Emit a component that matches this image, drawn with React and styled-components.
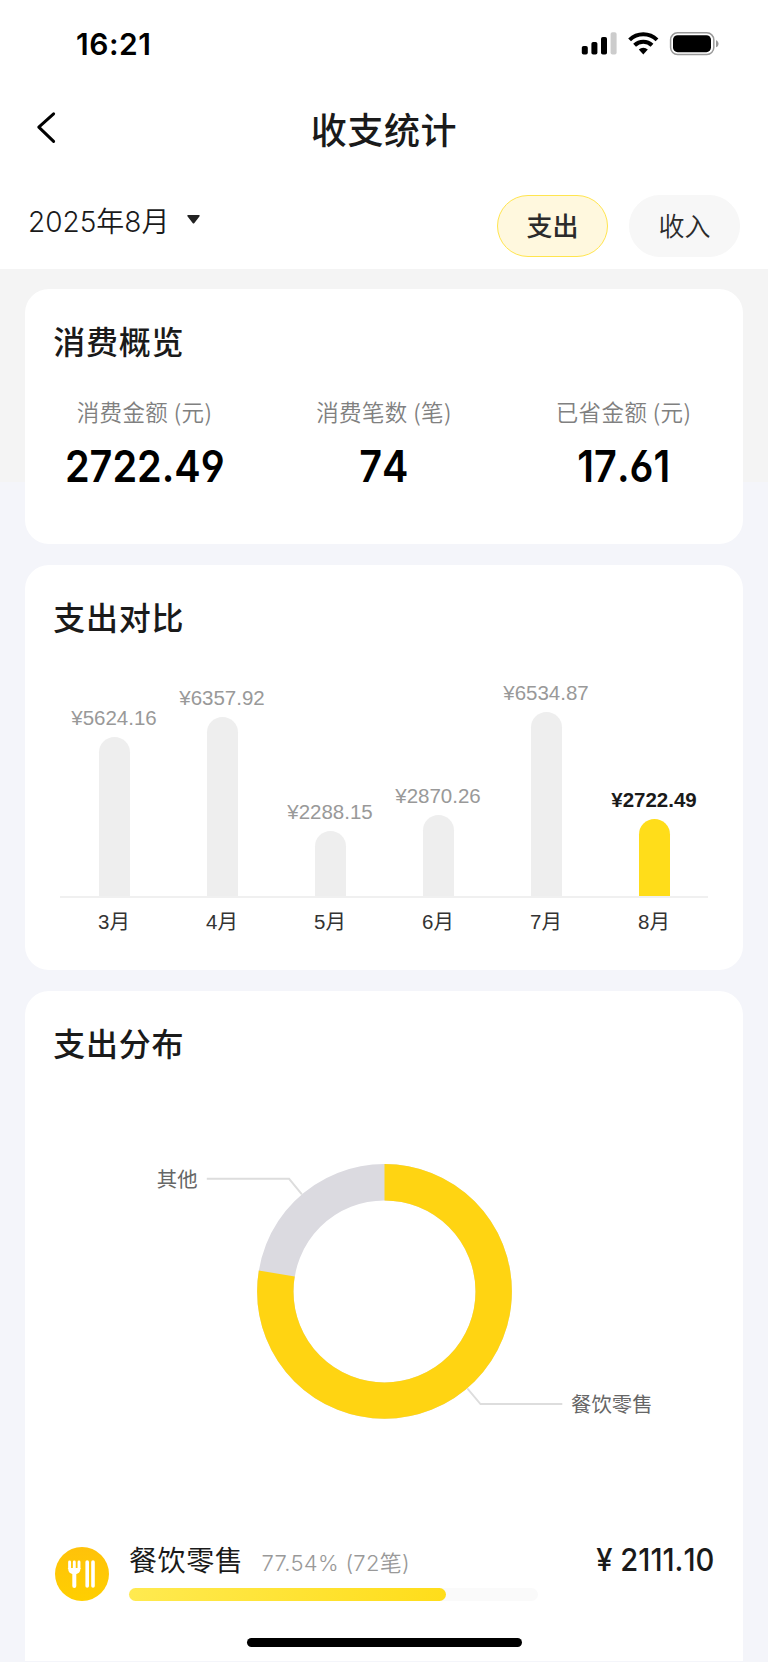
import styled, { createGlobalStyle } from 'styled-components';


const GlobalStyle = createGlobalStyle`
  * {
    box-sizing: border-box;
  }
  body {
    margin: 0;
    background: #f4f5fa;
    font-family: 'Inter', 'Noto Sans CJK SC', sans-serif;
    color: #1a1a1a;
  }
`;
const Page = styled.div`
  position: relative;
  width: 768px;
  height: 1662px;
  overflow: hidden;
  background: linear-gradient(#f4f4f4 482.5px, #f4f5fa 482.5px);
`;
const Header = styled.header`
  height: 269px;
  background: #fff;
`;
const StatusBar = styled.div`
  display: flex;
  align-items: center;
  justify-content: space-between;
  height: 88px;
  padding: 0 49px 0 76px;
`;
const Time = styled.div`
  font-size: 30px;
  font-weight: 600;
  letter-spacing: 0.5px;
  color: #000;
`;
const NavBar = styled.div`
  display: grid;
  grid-template-columns: 60px 1fr 60px;
  align-items: center;
  height: 80px;
  padding: 0 20px;
`;
const BackButton = styled.button`
  display: flex;
  padding: 0 0 0 16px;
  border: 0;
  background: none;
`;
const Title = styled.h1`
  margin: 0;
  padding-top: 5px;
  text-align: center;
  font-size: 36px;
  font-weight: 500;
  line-height: 44px;
  letter-spacing: 0.6px;
`;
const Filters = styled.div`
  display: flex;
  justify-content: space-between;
  padding: 27px 28px 0 28px;
`;
const MonthPicker = styled.div`
  display: flex;
  align-items: center;
  gap: 18px;
  height: 49px;
  font-size: 28px;
  font-weight: 350;
`;
const Tabs = styled.div`
  display: flex;
  gap: 21px;
`;
const Tab = styled.button`
  width: 111px;
  height: 62px;
  padding: 0 0 4px;
  border: 1px solid ${props => props.$active ? '#ffe54f' : '#f7f7f7'};
  border-radius: 31px;
  background: ${props => props.$active ? '#fff8de' : '#f7f7f7'};
  color: #2b2b2b;
  font-family: inherit;
  font-size: 26px;
  font-weight: ${props => props.$active ? 500 : 350};
`;
const Content = styled.main`
  display: flex;
  flex-direction: column;
  gap: 20.4px;
  padding: 20px 24.7px 0;
`;
const Card = styled.section`
  height: ${props => props.$height}px;
  padding-top: 34px;
  border-radius: 24px ${props => props.$open ? '24px 0 0' : ''};
  background: #fff;
`;
const CardTitle = styled.h2`
  margin: 0;
  padding-left: 28.6px;
  font-size: 32px;
  font-weight: 500;
  line-height: 40px;
  letter-spacing: 0.7px;
`;
const Stats = styled.div`
  display: grid;
  grid-template-columns: repeat(3, 1fr);
  margin-top: 33px;
  text-align: center;
`;
const StatLabel = styled.div`
  font-family: 'Noto Sans CJK SC', sans-serif;
  font-size: 22.5px;
  font-weight: 350;
  line-height: 30px;
  letter-spacing: 0.4px;
  color: #808080;
`;
const StatValue = styled.div`
  margin-top: 15px;
  font-size: 44px;
  font-weight: 600;
  line-height: 50px;
  font-kerning: none;
  font-feature-settings: 'cv03', 'cv04';
  color: #000;
  transform: scaleX(0.9);
`;
const BarChart = styled.div`
  width: 648px;
  margin: 51px auto 0;
  font-family: 'Liberation Sans', 'Noto Sans CJK SC', sans-serif;
  font-size: 20.5px;
`;
const Bars = styled.div`
  display: flex;
  align-items: flex-end;
  height: 208px;
  border-bottom: 2px solid #f0f0f0;
`;
const BarColumn = styled.div`
  display: flex;
  flex: 1;
  flex-direction: column;
  align-items: center;
  gap: 8px;
  min-width: 0;
`;
const BarValue = styled.div`
  line-height: 22px;
  font-weight: ${props => props.$active ? 'bold' : 'normal'};
  color: ${props => props.$active ? '#1a1a1a' : '#999'};
`;
const Bar = styled.div`
  width: 31px;
  border-radius: 16px 16px 0 0;
  background: ${props => props.$active ? '#ffdd1a' : '#eee'};
`;
const Months = styled.div`
  display: flex;
  margin-top: 10px;
`;
const Month = styled.div`
  flex: 1;
  text-align: center;
  line-height: 28px;
  color: #333;
`;
const Donut = styled.svg`
  display: block;
  width: 718.6px;
  height: 436px;
  font-family: 'Noto Sans CJK SC', sans-serif;
  font-size: 20.4px;
`;
const CategoryRow = styled.div`
  display: grid;
  grid-template-columns: 54px 409px 1fr;
  column-gap: 20px;
  align-items: start;
  padding: 37px 29px 0 30.3px;
`;
const CategoryIcon = styled.div`
  margin-top: 9px;
  width: 54px;
  height: 54px;
  border-radius: 50%;
  background: linear-gradient(#ffc20a, #ffcf00);
`;
const CategoryHead = styled.div`
  display: flex;
  align-items: baseline;
  gap: 18px;
  height: 50px;
  padding-top: 3px;
`;
const CategoryName = styled.span`
  font-size: 28px;
  line-height: 40px;
  letter-spacing: 0.6px;
`;
const CategoryShare = styled.span`
  font-size: 22px;
  font-weight: 350;
  letter-spacing: 0.3px;
  color: #999;
`;
const Track = styled.div`
  height: 13px;
  border-radius: 7px;
  background: #fafafa;
`;
const Fill = styled.div`
  height: 100%;
  border-radius: 7px;
  background: linear-gradient(100deg, #ffea50, #ffdd1a);
`;
const Amount = styled.div`
  padding-top: 2px;
  text-align: right;
  font-size: 31px;
  font-weight: 500;
  line-height: 40px;
  font-kerning: none;
  white-space: nowrap;
  transform: scaleX(0.94);
  transform-origin: right;
`;
const HomeIndicator = styled.div`
  position: absolute;
  left: 247px;
  bottom: 15px;
  width: 274.5px;
  height: 9px;
  border-radius: 5px;
  background: #000;
`;

const stats = [
    { label: '消费金额 (元)', value: '2722.49' },
    { label: '消费笔数 (笔)', value: '74' },
    { label: '已省金额 (元)', value: '17.61' },
];
const months = [
    { name: '3月', value: 5624.16 },
    { name: '4月', value: 6357.92 },
    { name: '5月', value: 2288.15 },
    { name: '6月', value: 2870.26 },
    { name: '7月', value: 6534.87 },
    { name: '8月', value: 2722.49, active: true },
];
const PX_PER_YUAN = 0.0282;


function StatusIcons(){
    return(
        <svg width="138" height="24" viewBox="581 32 138 24" fill="#000">
            <rect x="581.8" y="46" width="6" height="8.6" rx="1.8" />
            <rect x="591.4" y="42" width="6" height="12.6" rx="1.8" />
            <rect x="601" y="37" width="6" height="17.6" rx="1.8" />
            <rect x="610.6" y="32.3" width="6" height="22.3" rx="1.8" fill="#ccc" />
            <g fill="none" stroke="#000" strokeWidth="4">
                <path d="M629.6 39.9a19.6 19.6 0 0 1 27.4 0" />
                <path d="M634.6 45.2a12.4 12.4 0 0 1 17.4 0" />
            </g>
            <path d="M638.8 49.6a6.6 6.6 0 0 1 9 0l-4.5 4.9z" />
            <rect x="670.6" y="32.8" width="43.2" height="21.8" rx="7" fill="none" stroke="#999" strokeWidth="1.5" />
            <rect x="673" y="35.2" width="38" height="17" rx="4.6" />
            <path d="M716 40.2c3.4 1 3.4 6 0 7z" fill="#999" />
        </svg>
    )
}

function DonutChart(){
    // share of the main category, clockwise from 12 o'clock
    const share = 0.7754;
    const radius = 109.2;
    const length = 2 * Math.PI * radius;
    return(
        <Donut viewBox="24.7 1064.6 718.6 436">
            <g fill="none" strokeWidth="36.4">
                <circle cx="384.2" cy="1291" r={radius} stroke="#dbdae0" />
                <circle
                    cx="384.2"
                    cy="1291"
                    r={radius}
                    stroke="#ffd412"
                    strokeDasharray={`${length * share} ${length}`}
                    transform="rotate(-90 384.2 1291)"
                />
            </g>
            <g fill="none" stroke="#ddd" strokeWidth="1.9">
                <path d="M206.5 1178.4H288.8L301.6 1194" />
                <path d="M467 1388L480.2 1403.6H562" />
            </g>
            <g fill="#666">
                <text x="156.5" y="1186.5">其他</text>
                <text x="570.8" y="1411.5">餐饮零售</text>
            </g>
        </Donut>
    )
}

function App(){
    return(
        <Page>
            <GlobalStyle />
            <Header>
                <StatusBar>
                    <Time>16:21</Time>
                    <StatusIcons />
                </StatusBar>
                <NavBar>
                    <BackButton>
                        <svg width="22" height="34" viewBox="36 111 22 34" fill="none" stroke="#000" strokeWidth="3" strokeLinecap="round" strokeLinejoin="round">
                            <path d="M53.6 113.8L38.8 127.2L53.6 141.4" />
                        </svg>
                    </BackButton>
                    <Title>收支统计</Title>
                </NavBar>
                <Filters>
                    <MonthPicker>
                        <span>2025年8月</span>
                        <svg width="13" height="9" viewBox="0 0 13 9" fill="#222">
                            <path d="M1 0h11q1.2.4.4 1.4L7.4 8q-.9 1-1.8 0L.6 1.4q-.8-1 .4-1.4z" />
                        </svg>
                    </MonthPicker>
                    <Tabs>
                        <Tab $active>支出</Tab>
                        <Tab>收入</Tab>
                    </Tabs>
                </Filters>
            </Header>
            <Content>
                <Card $height={255.4}>
                    <CardTitle>消费概览</CardTitle>
                    <Stats>
                        {stats.map(item => (
                            <div key={item.label}>
                                <StatLabel>{item.label}</StatLabel>
                                <StatValue>{item.value}</StatValue>
                            </div>
                        ))}
                    </Stats>
                </Card>
                <Card $height={405.6}>
                    <CardTitle>支出对比</CardTitle>
                    <BarChart>
                        <Bars>
                            {months.map(item => (
                                <BarColumn key={item.name}>
                                    <BarValue $active={item.active}>¥{item.value}</BarValue>
                                    <Bar $active={item.active} style={{ height: item.value * PX_PER_YUAN }} />
                                </BarColumn>
                            ))}
                        </Bars>
                        <Months>
                            {months.map(item => <Month key={item.name}>{item.name}</Month>)}
                        </Months>
                    </BarChart>
                </Card>
                <Card $height={670} $open>
                    <CardTitle>支出分布</CardTitle>
                    <DonutChart />
                    <CategoryRow>
                        <CategoryIcon>
                            <svg width="54" height="54" viewBox="0 0 54 54" fill="none" stroke="#fff" strokeLinecap="round">
                                <path d="M14.6 15v6.5q0 4 4.7 4.5 4.7-.5 4.7-4.5V15M19.3 15v10" strokeWidth="2.9" />
                                <path d="M15.1 22h8.5l-4.2 4z" strokeWidth="2" fill="#fff" />
                                <path d="M19.3 24v15" strokeWidth="4" />
                                <path d="M32.2 15v24" strokeWidth="3.6" />
                                <path d="M38 15v24" strokeWidth="3.6" />
                            </svg>
                        </CategoryIcon>
                        <div>
                            <CategoryHead>
                                <CategoryName>餐饮零售</CategoryName>
                                <CategoryShare>77.54% (72笔)</CategoryShare>
                            </CategoryHead>
                            <Track>
                                <Fill style={{ width: '77.54%' }} />
                            </Track>
                        </div>
                        <Amount>¥ 2111.10</Amount>
                    </CategoryRow>
                </Card>
            </Content>
            <HomeIndicator />
        </Page>
    )
}


export default App;
